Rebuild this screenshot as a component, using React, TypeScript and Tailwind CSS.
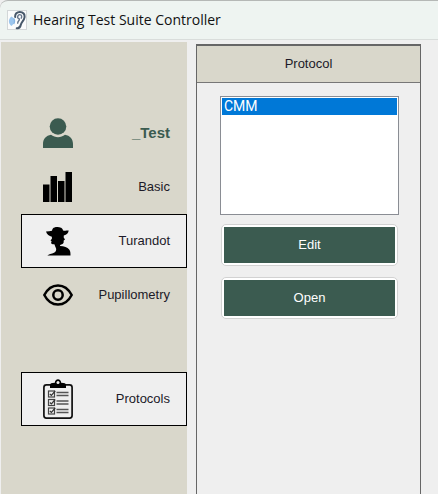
import type { ReactNode } from "react";

function EarIcon() {
  return (
    <svg viewBox="0 0 20 20" className="size-5 shrink-0" aria-hidden="true">
      <rect x="0.5" y="0.5" width="19" height="19" fill="#fbfcfc" stroke="#d3d7d8" />
      <g fill="none" strokeLinecap="round">
        <path d="M8.200 7C7.800 3.800 10 1.900 12.800 1.900c3.400 0 5.200 2.400 4.700 5.600-.4 3.200-3 4.200-3.600 7-.5 2.300-1.800 4.200-4.200 3.700" stroke="#47586a" strokeWidth="2" />
        <path d="M10.600 7.600c.1-2 1-3.200 2.400-3 1.800.2 2.100 2.200 1.200 3.600M11 8.200c1.500.2 1.900 1.600.6 2.700-.9.800-.6 1.500-.9 2.300" stroke="#64748a" strokeWidth="1.400" />
      </g>
      <path d="M4.500 6.500c3.200 1.500 3.800 6.500 0 9.500-1.800-1.300-2.600-2.700-2.600-4.700s.8-3.500 2.600-4.800z" fill="#9cc6ee" />
      <path d="M6.600 8.200c1.200 1.800 1.200 4.200 0 6" fill="none" stroke="#86b4e2" strokeWidth="1.200" />
    </svg>
  );
}

function UserIcon() {
  return (
    <svg viewBox="0 0 30 30" className="size-[30px]" aria-hidden="true" fill="#3b5b50">
      <circle cx="15" cy="8.500" r="8.300" />
      <path d="M0 30v-4c0-5 3.200-8.500 8-9.200 4 3.200 10 3.200 14 0 4.800.7 8 4.200 8 9.200v4z" />
    </svg>
  );
}

function BarsIcon() {
  return (
    <svg viewBox="0 0 30 30" className="size-[30px]" aria-hidden="true">
      <path d="M0 12.500h6.500V30H0zM7.500 4h6.500v26H7.500zM15 9h6.500v21H15zM22.500 0H29v30h-6.500z" />
    </svg>
  );
}

function HatIcon() {
  return (
    <svg viewBox="0 0 30 30" className="size-[30px]" aria-hidden="true">
      <path d="M3 5.500c2.200-.3 4.300-.3 6-.7.3-2 1.200-3 2.600-3.300 1-.8 4.300-.8 5.400 0 1.700.3 2.700 1.300 3 2.900 1.700.5 3.700.1 5.700.2-.3 2.500-2 4.200-4.900 5l-.1 2 1.300 1.800-1.300 1-.1 2.400c-1 1.500-2 1.700-3.400 2.100l-.2 1.200c4.300.2 7.400 1.200 9.200 3.500 1.200 1.500 1.300 3.400 1.300 5.900H4.300c1.300-1.100 4.500-1.600 6.700-2.700 1.900-1 2.600-2.700 2-4.500-.5-1.500-1.300-2.700-1.600-4-2 .1-3.200-.4-3.300-1.600l.5-1.400-1.100-.9 1.400-1.700v-2C6.200 9.800 3.800 8.500 3 5.500z" />
    </svg>
  );
}

function EyeIcon() {
  return (
    <svg viewBox="0 0 30 22" className="h-[22px] w-[30px]" aria-hidden="true" fill="none" stroke="#000" strokeWidth="2.500">
      <path d="M1.300 11C4.500 4.800 9.300 1.400 15 1.400S25.500 4.800 28.700 11C25.500 17.200 20.700 20.600 15 20.600S4.500 17.200 1.300 11z" strokeLinejoin="round" />
      <circle cx="15" cy="11" r="4.700" />
    </svg>
  );
}

function ClipboardIcon() {
  return (
    <svg viewBox="0 0 30 40" className="h-10 w-[30px]" aria-hidden="true" fill="none" stroke="#111">
      <rect x="0.900" y="5.900" width="28.200" height="33.200" rx="2.500" strokeWidth="1.700" />
      <path d="M7 9V6.200C7 4.500 8.500 3.900 11.800 3.800 12 1.500 13.200.2 15 .2s3 1.300 3.200 3.600C21.500 3.900 23 4.500 23 6.200V9z" fill="#000" stroke="none" />
      <circle cx="15" cy="3.400" r="1.500" fill="#eee" stroke="none" />
      {[15, 23.500, 32].map((y) => (
        <g key={y}>
          <rect x="5.500" y={y - 3} width="6" height="6" strokeWidth="1.200" stroke="#444" />
          <path d={`M6.800 ${y}l1.600 1.500 3.800-4.500`} strokeWidth="1.200" stroke="#333" />
          <path d={`M13.500 ${y - 1.500}h12M13.500 ${y + 1.500}h12`} strokeWidth="1.500" stroke="#555" />
        </g>
      ))}
    </svg>
  );
}

function NavItem({ icon, label, framed, strong }: { icon: ReactNode; label: string; framed?: boolean; strong?: boolean }) {
  return (
    <button
      type="button"
      className={`flex h-[54px] w-full items-center justify-between border pr-4 pl-[21px] ${
        framed ? "border-black bg-[#efefef]" : "border-transparent"
      } ${strong ? "text-[15px] font-bold text-[#3b5b50]" : "text-[13px] text-[#1c1a28]"}`}
    >
      {icon}
      <span>{label}</span>
    </button>
  );
}

function ActionButton({ children }: { children: ReactNode }) {
  return (
    <button type="button" className="h-[42px] rounded-[5px] border border-[#d2d2d2] bg-white p-0.5">
      <span className="flex h-full items-center justify-center bg-[#3b5b50] text-white">{children}</span>
    </button>
  );
}

export default function App() {
  return (
    <div className="flex min-h-screen flex-col bg-[#efefef] font-['Liberation_Sans',Arial,sans-serif] text-[13px]">
      <header className="flex h-10 items-center gap-1.5 rounded-tl-lg border-t border-b border-t-[#b5b8b6] border-b-[#d9dddb] bg-[#eef4f1] pl-[7px]">
        <EarIcon />
        <h1 className="font-['Open_Sans',sans-serif] text-sm text-[#111]">Hearing Test Suite Controller</h1>
      </header>
      <div className="flex flex-1 pt-0.5 pr-[17px] pl-px">
        <nav aria-label="Sections" className="flex w-[186px] shrink-0 flex-col bg-[#d9d7cb] pt-16 pl-5">
          <NavItem icon={<UserIcon />} label="_Test" strong />
          <NavItem icon={<BarsIcon />} label="Basic" />
          <NavItem icon={<HatIcon />} label="Turandot" framed />
          <NavItem icon={<EyeIcon />} label="Pupillometry" />
          <div className="mt-[50px]">
            <NavItem icon={<ClipboardIcon />} label="Protocols" framed />
          </div>
        </nav>
        <main className="mt-0.5 ml-[9px] flex flex-1 flex-col border-x border-t-2 border-[#666]">
          <h2 id="protocol" className="flex h-[37px] items-center justify-center border-b border-[#777] bg-[#d9d7cb] text-[#1c1a28]">
            Protocol
          </h2>
          <div className="flex flex-col pt-[13px] pr-[21px] pl-[23px]">
            <select
              size={6}
              aria-labelledby="protocol"
              defaultValue="CMM"
              className="h-[119px] appearance-none overflow-hidden rounded-none border border-[#8a8d94] bg-white bg-none p-px font-[Roboto,sans-serif] text-sm"
            >
              <option className="h-4 px-0.5 py-0 leading-4 text-white checked:bg-[#0078d7] checked:bg-linear-to-r checked:from-[#0078d7] checked:to-[#0078d7] checked:text-white">
                CMM
              </option>
            </select>
            <div className="mt-[9px] flex flex-col gap-[11px] px-px">
              <ActionButton>Edit</ActionButton>
              <ActionButton>Open</ActionButton>
            </div>
          </div>
        </main>
      </div>
    </div>
  );
}
